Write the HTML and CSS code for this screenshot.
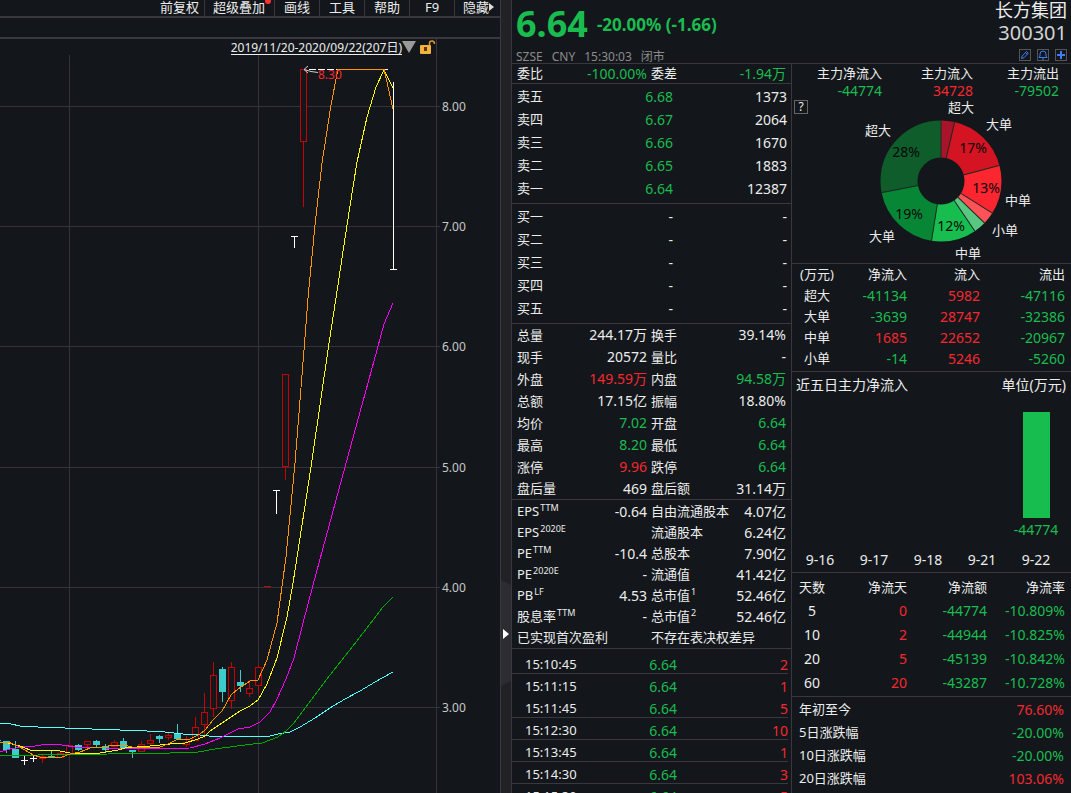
FILE: index.html
```
<!DOCTYPE html>
<html lang="zh-CN">
<head>
    <meta charset="UTF-8">
    <meta name="viewport" content="width=device-width, initial-scale=1.0">
    <title>长方集团 300301</title>
    <link rel="stylesheet" href="styles.css">
</head>
<body>
    <div class="terminal">
        <main class="chart-pane">
            <nav class="toolbar">
                <button>前复权</button>
                <button class="has-dot">超级叠加</button>
                <button>画线</button>
                <button>工具</button>
                <button>帮助</button>
                <button>F9</button>
                <button class="hide-btn">隐藏<svg width="5" height="8" viewBox="0 0 5 8"><path d="M0 0L5 4L0 8z" fill="#ddd"/></svg></button>
            </nav>
            <div class="strip"></div>
            <div class="chart-head">
                <button class="range">2019/11/20-2020/09/22(207日)</button>
                <svg width="14" height="12" viewBox="0 0 14 12"><path d="M0 0H14L7 12z" fill="#9a9a9a"/></svg>
                <svg class="lock" width="16" height="15" viewBox="0 0 16 15">
                    <rect x="0" y="5" width="11" height="9" rx="1" fill="#f3b33d"/>
                    <path d="M4 7H7V11H4z" fill="#5a3c08"/>
                    <path d="M9.500 5V3Q9.500 1 12 1Q14.500 1 14.500 4" fill="none" stroke="#d8982a" stroke-width="1.500"/>
                </svg>
            </div>
            <svg class="kline" viewBox="0 55 500 738" preserveAspectRatio="xMinYMin meet">
                <g class="grid">
                    <path d="M0 106.500H440M0 226.500H440M0 346.500H440M0 467.500H440M0 587.500H440M0 707.500H440"/>
                    <path d="M69.500 55V793M258.500 55V793M436.500 55V793"/>
                </g>
                <g class="axis">
                    <text x="442" y="111">8.00</text>
                    <text x="442" y="231">7.00</text>
                    <text x="442" y="351">6.00</text>
                    <text x="442" y="472">5.00</text>
                    <text x="442" y="592">4.00</text>
                    <text x="442" y="712">3.00</text>
                </g>
                <g id="candles"></g>
                <g class="marks">
                    <!-- one-price limit days -->
                    <path d="M309 69.500H389" stroke-dasharray="7 2"/>
                    <path d="M21 760.500h7M24.500 755v10M30 758.500h7M33.500 755v7"/>
                    <path d="M273 490.500h7M276.500 490v24M291 236.500h7M294.500 236v12"/>
                    <path d="M393.500 82V269M390 269.500h7"/>
                    <path d="M264 586.500h7" stroke="#c00"/>
                </g>
                <g class="ma">
                    <polyline stroke="#5ff" points="0,723 11,724 20,726 38,727 65,728 92,729 120,730 147,731 165,732 183,734 200,735 209,736 270,736 278,734 290,732 300,727 315,718 330,708 345,699 360,691 375,682 393,672"/>
                    <polyline stroke="#0a0" points="0,755 38,755 108,754 112,753 170,753 198,752 215,749 230,747 245,745 262,743 278,737 286,731 293,724 300,715 312,699 330,675 353,646 370,624 383,607 393,597"/>
                    <polyline stroke="#f0f" points="0,752 10,749 22,747 35,746 48,744 62,745 75,747 92,747 105,748 140,749 190,748 205,744 220,738 238,729 250,727 260,722 270,712 277,699 286,679 294,658 302,627 313,585 345,467 377,350 384,324 393,303"/>
                    <polyline stroke="#ff0" points="0,742 8,743 20,746 30,750 60,751 70,753 80,754 100,753 118,750 125,748 150,746 170,744 185,743 198,739 205,736 210,731 225,721 240,711 250,706 258,700 267,684 277,658 287,617 293,583 311,467 328,350 336,298 347,225 357,162 367,117 376,87 384,70 393,88"/>
                    <polyline stroke="#ff9500" points="0,743 8,742 18,746 25,750 33,755 40,757 55,758 62,757 70,754 80,752 90,748 105,747 112,745 125,745 135,748 160,747 168,744 178,739 190,739 200,734 205,730 213,720 222,711 231,695 238,689 250,681 258,680 267,660 277,623 286,557 295,463 304,350 308,298 315,225 322,163 331,105 338,69 384,69 393,109"/>
                </g>
                <path class="arrow" d="M308 66L304 69.500L308 73M304 69.500L311 71.500L318 72.500"/>
                <text class="high" x="318" y="79">8.30</text>
            </svg>
        </main>

        <button class="splitter" aria-label="展开">
            <svg width="10" height="106" viewBox="0 0 10 106">
                <path d="M0 0L10 5V101L0 106z" fill="#2c2c32"/>
                <path d="M2 49L8 54L2 59z" fill="#fff"/>
            </svg>
        </button>

        <aside class="quote">
            <header class="quote-head">
                <div class="price-box">
                    <div class="price-line down">
                        <strong class="price">6.64</strong>
                        <strong class="change">-20.00% (-1.66)</strong>
                    </div>
                    <div class="market"><span>SZSE</span><span>CNY</span><span>15:30:03</span><span>闭市</span></div>
                </div>
                <div class="stock">
                    <h1>长方集团</h1>
                    <div class="code">300301</div>
                    <div class="tools">
                        <button aria-label="编辑"><svg width="10" height="10" viewBox="0 0 10 10"><path d="M1.500 8.500L2.200 6L6.500 1.500L8.300 3.200L4 7.700zM5.500 2.500L7.300 4.300"/></svg></button>
                        <button aria-label="提醒"><svg width="10" height="10" viewBox="0 0 10 10"><path d="M1 7.500H9L8 6V4Q8 1 5 1Q2 1 2 4V6zM4 9H6"/></svg></button>
                        <button aria-label="添加"><svg width="10" height="10" viewBox="0 0 10 10"><path d="M5 1V9M1 5H9" stroke-width="2"/></svg></button>
                    </div>
                </div>
            </header>

            <div class="columns">
                <section class="book">
                    <table class="pairs weibi">
                        <tr><th>委比</th><td class="down">-100.00%</td><th>委差</th><td class="down">-1.94万</td></tr>
                    </table>
                    <table class="levels">
                        <tr><th>卖五</th><td class="down">6.68</td><td>1373</td></tr>
                        <tr><th>卖四</th><td class="down">6.67</td><td>2064</td></tr>
                        <tr><th>卖三</th><td class="down">6.66</td><td>1670</td></tr>
                        <tr><th>卖二</th><td class="down">6.65</td><td>1883</td></tr>
                        <tr><th>卖一</th><td class="down">6.64</td><td>12387</td></tr>
                    </table>
                    <table class="levels">
                        <tr><th>买一</th><td>-</td><td>-</td></tr>
                        <tr><th>买二</th><td>-</td><td>-</td></tr>
                        <tr><th>买三</th><td>-</td><td>-</td></tr>
                        <tr><th>买四</th><td>-</td><td>-</td></tr>
                        <tr><th>买五</th><td>-</td><td>-</td></tr>
                    </table>
                    <table class="pairs stats">
                        <tr><th>总量</th><td>244.17万</td><th>换手</th><td>39.14%</td></tr>
                        <tr><th>现手</th><td>20572</td><th>量比</th><td>-</td></tr>
                        <tr><th>外盘</th><td class="up">149.59万</td><th>内盘</th><td class="down">94.58万</td></tr>
                        <tr><th>总额</th><td>17.15亿</td><th>振幅</th><td>18.80%</td></tr>
                        <tr><th>均价</th><td class="down">7.02</td><th>开盘</th><td class="down">6.64</td></tr>
                        <tr><th>最高</th><td class="down">8.20</td><th>最低</th><td class="down">6.64</td></tr>
                        <tr><th>涨停</th><td class="up">9.96</td><th>跌停</th><td class="down">6.64</td></tr>
                        <tr><th>盘后量</th><td>469</td><th>盘后额</th><td>31.14万</td></tr>
                    </table>
                    <table class="pairs ratios">
                        <tr><th>EPS<sup>TTM</sup></th><td>-0.64</td><th>自由流通股本</th><td>4.07亿</td></tr>
                        <tr><th>EPS<sup>2020E</sup></th><td></td><th>流通股本</th><td>6.24亿</td></tr>
                        <tr><th>PE<sup>TTM</sup></th><td>-10.4</td><th>总股本</th><td>7.90亿</td></tr>
                        <tr><th>PE<sup>2020E</sup></th><td>-</td><th>流通值</th><td>41.42亿</td></tr>
                        <tr><th>PB<sup>LF</sup></th><td>4.53</td><th>总市值<sup>1</sup></th><td>52.46亿</td></tr>
                        <tr><th>股息率<sup>TTM</sup></th><td>-</td><th>总市值<sup>2</sup></th><td>52.46亿</td></tr>
                        <tr><th colspan="2">已实现首次盈利</th><th colspan="2">不存在表决权差异</th></tr>
                    </table>
                    <div class="ticks">
                        <div class="tick"><span>15:10:45</span><span class="down">6.64</span><span class="up">2</span></div>
                        <div class="tick same"><span>15:11:15</span><span class="down">6.64</span><span class="up">1</span></div>
                        <div class="tick"><span>15:11:45</span><span class="down">6.64</span><span class="up">5</span></div>
                        <div class="tick"><span>15:12:30</span><span class="down">6.64</span><span class="up">10</span></div>
                        <div class="tick"><span>15:13:45</span><span class="down">6.64</span><span class="up">1</span></div>
                        <div class="tick"><span>15:14:30</span><span class="down">6.64</span><span class="up">3</span></div>
                        <div class="tick"><span>15:15:30</span><span class="down">6.64</span><span class="up">5</span></div>
                    </div>
                </section>

                <section class="flow">
                    <div class="donut-box">
                        <div class="sums">
                            <div>主力净流入<b class="down">-44774</b></div>
                            <div>主力流入<b class="up">34728</b></div>
                            <div>主力流出<b class="down">-79502</b></div>
                        </div>
                        <div class="donut">
                            <button class="help">?</button>
                            <svg viewBox="792 100 279 163">
                                <g class="ring" transform="rotate(-90 941 181)">
                                    <circle cx="941" cy="181" r="42" pathLength="360" stroke="#a8152a" stroke-dasharray="13 347"/>
                                    <circle cx="941" cy="181" r="42" pathLength="360" stroke="#d51423" stroke-dasharray="62 298" stroke-dashoffset="-13"/>
                                    <circle cx="941" cy="181" r="42" pathLength="360" stroke="#fc2631" stroke-dasharray="47 313" stroke-dashoffset="-75"/>
                                    <circle cx="941" cy="181" r="42" pathLength="360" stroke="#ff5358" stroke-dasharray="12 348" stroke-dashoffset="-122"/>
                                    <circle cx="941" cy="181" r="42" pathLength="360" stroke="#59c681" stroke-dasharray="12 348" stroke-dashoffset="-134"/>
                                    <circle cx="941" cy="181" r="42" pathLength="360" stroke="#18bd50" stroke-dasharray="43 317" stroke-dashoffset="-146"/>
                                    <circle cx="941" cy="181" r="42" pathLength="360" stroke="#078636" stroke-dasharray="70 290" stroke-dashoffset="-189"/>
                                    <circle cx="941" cy="181" r="42" pathLength="360" stroke="#0e5d2b" stroke-dasharray="101 259" stroke-dashoffset="-259"/>
                                </g>
                                <g class="cuts">
                                    <path d="M941 158V120"/>
                                    <path d="M941 158V120" transform="rotate(13 941 181)"/>
                                    <path d="M941 158V120" transform="rotate(75 941 181)"/>
                                    <path d="M941 158V120" transform="rotate(122 941 181)"/>
                                    <path d="M941 158V120" transform="rotate(134 941 181)"/>
                                    <path d="M941 158V120" transform="rotate(146 941 181)"/>
                                    <path d="M941 158V120" transform="rotate(189 941 181)"/>
                                    <path d="M941 158V120" transform="rotate(259 941 181)"/>
                                </g>
                                <g class="pct">
                                    <text x="973" y="153">17%</text>
                                    <text x="986" y="193">13%</text>
                                    <text x="951" y="231">12%</text>
                                    <text x="909" y="219">19%</text>
                                    <text x="906" y="157">28%</text>
                                </g>
                                <g class="names">
                                    <text x="961" y="112">超大</text>
                                    <text x="999" y="129">大单</text>
                                    <text x="1018" y="205">中单</text>
                                    <text x="1005" y="235">小单</text>
                                    <text x="968" y="258">中单</text>
                                    <text x="882" y="241">大单</text>
                                    <text x="878" y="135">超大</text>
                                </g>
                            </svg>
                        </div>
                    </div>

                    <table class="grid-table orders">
                        <tr><th>(万元)</th><th>净流入</th><th>流入</th><th>流出</th></tr>
                        <tr><th>超大</th><td class="down">-41134</td><td class="up">5982</td><td class="down">-47116</td></tr>
                        <tr><th>大单</th><td class="down">-3639</td><td class="up">28747</td><td class="down">-32386</td></tr>
                        <tr><th>中单</th><td class="up">1685</td><td class="up">22652</td><td class="down">-20967</td></tr>
                        <tr><th>小单</th><td class="down">-14</td><td class="up">5246</td><td class="down">-5260</td></tr>
                    </table>

                    <div class="five-day">
                        <div class="five-title"><span>近五日主力净流入</span><span>单位(万元)</span></div>
                        <div class="bars">
                            <div class="day"><time>9-16</time></div>
                            <div class="day"><time>9-17</time></div>
                            <div class="day"><time>9-18</time></div>
                            <div class="day"><time>9-21</time></div>
                            <div class="day"><i class="bar" style="height: 106px"></i><span class="down">-44774</span><time>9-22</time></div>
                        </div>
                    </div>

                    <table class="grid-table days">
                        <tr><th>天数</th><th>净流天</th><th>净流额</th><th>净流率</th></tr>
                        <tr><td>5</td><td class="up">0</td><td class="down">-44774</td><td class="down">-10.809%</td></tr>
                        <tr><td>10</td><td class="up">2</td><td class="down">-44944</td><td class="down">-10.825%</td></tr>
                        <tr><td>20</td><td class="up">5</td><td class="down">-45139</td><td class="down">-10.842%</td></tr>
                        <tr><td>60</td><td class="up">20</td><td class="down">-43287</td><td class="down">-10.728%</td></tr>
                    </table>

                    <dl class="returns">
                        <div><dt>年初至今</dt><dd class="up">76.60%</dd></div>
                        <div><dt>5日涨跌幅</dt><dd class="down">-20.00%</dd></div>
                        <div><dt>10日涨跌幅</dt><dd class="down">-20.00%</dd></div>
                        <div><dt>20日涨跌幅</dt><dd class="up">103.06%</dd></div>
                    </dl>
                </section>
            </div>
        </aside>
    </div>

    <script>
        // x, body top, body bottom, high, low, rising
        const candles = [
            [-3, 740, 741, 740, 741, 0], [6, 741, 750, 741, 753, 0], [15, 749, 758, 741, 758, 0],
            [42, 756, 758, 755, 763, 1], [51, 756, 758, 751, 758, 0], [60, 753, 757, 752, 757, 1],
            [69, 745, 754, 745, 754, 1], [78, 745, 750, 744, 751, 0], [87, 741, 744, 741, 747, 1],
            [96, 741, 745, 740, 747, 0], [105, 746, 750, 744, 752, 0], [114, 742, 746, 740, 746, 1],
            [123, 741, 749, 738, 749, 0], [132, 750, 752, 750, 758, 0], [141, 744, 751, 741, 751, 1],
            [150, 740, 743, 734, 745, 1], [159, 736, 739, 735, 743, 0], [168, 735, 737, 732, 740, 1],
            [177, 733, 739, 724, 739, 0], [186, 742, 744, 736, 747, 1], [195, 727, 740, 717, 740, 1],
            [204, 712, 724, 693, 738, 1], [213, 675, 708, 662, 717, 1], [222, 669, 692, 667, 702, 0],
            [231, 667, 700, 662, 709, 1], [240, 682, 686, 670, 692, 0], [249, 688, 693, 680, 697, 1],
            [258, 667, 685, 665, 693, 1], [285, 374, 466, 374, 480, 1], [303, 69, 141, 69, 207, 1]
        ];
        const candleGroup = document.getElementById('candles');

        candles.forEach(([x, top, bottom, high, low, rising]) => {
            const path = document.createElementNS('http://www.w3.org/2000/svg', 'path');
            const mid = x + 0.5;
            if (rising) {
                path.setAttribute('class', 'rise');
                path.setAttribute('d', `M${x - 2.5} ${top + 0.5}h6V${bottom + 0.5}h-6zM${mid} ${high}V${top}M${mid} ${bottom + 1}V${low}`);
            } else {
                path.setAttribute('class', 'fall');
                path.setAttribute('d', `M${x - 3} ${top}h7V${bottom}h-7zM${x} ${high}h1V${low}h-1z`);
            }
            candleGroup.appendChild(path);
        });
    </script>
</body>
</html>
```
FILE: styles.css
```
/* General */
* {
    box-sizing: border-box;
}

body {
    margin: 0;
    background-color: #13171b;
    color: #ececec;
    font-family: "Noto Sans", "Noto Sans CJK SC", sans-serif;
    font-size: 13px;
    overflow: hidden;
}

button {
    margin: 0;
    padding: 0;
    border: none;
    background: none;
    color: inherit;
    font: inherit;
    cursor: pointer;
}

svg {
    display: block;
}

.up {
    color: #f5282f;
}

.down {
    color: #1abc50;
}

.terminal {
    display: flex;
    height: 100vh;
}

/* Chart side */
.chart-pane {
    flex: 1;
    min-width: 0;
    display: flex;
    flex-direction: column;
}

.toolbar {
    display: flex;
    justify-content: flex-end;
    height: 18px;
    border-bottom: 2px solid #38383e;
}

.toolbar button {
    position: relative;
    min-width: 45px;
    height: 16px;
    padding: 0 5px 2px;
    line-height: 14px;
    border-right: 1px solid #38383e;
}

.toolbar .has-dot {
    padding: 0 9px 2px 8px;
}

.has-dot::after {
    content: "";
    position: absolute;
    top: -2px;
    right: 3px;
    width: 6px;
    height: 6px;
    border-radius: 50%;
    background-color: #f33;
}

.toolbar .hide-btn {
    display: flex;
    align-items: center;
    padding-left: 8px;
    border-right: none;
}

.strip {
    height: 21px;
    border-bottom: 2px solid #38383e;
}

.chart-head {
    display: flex;
    justify-content: flex-end;
    align-items: center;
    height: 16px;
    margin-right: 63px;
    border-right: 1px solid #38383e;
}

.range {
    height: 15px;
    line-height: 15px;
    font-size: 12px;
    border-bottom: 1px solid #ececec;
}

.lock {
    margin-left: 4px;
}

.kline {
    flex: 1;
    min-height: 0;
    width: 100%;
    shape-rendering: crispEdges;
    fill: none;
}

.grid path {
    stroke: #333338;
}

.axis text {
    fill: #c8c8c8;
    font-size: 12px;
}

.marks path {
    stroke: #fff;
}

.marks path[stroke] {
    stroke: #c00;
}

.rise {
    stroke: #c80000;
    fill: #13171b;
}

.fall {
    fill: #3ccccc;
}

.arrow {
    stroke: #ccc;
    shape-rendering: auto;
}

.high {
    fill: #f5282f;
    font-size: 12px;
}

/* Splitter */
.splitter {
    display: flex;
    flex: 0 0 12px;
    flex-direction: column;
    justify-content: flex-start;
    padding-top: 580px;
    background-color: #212126;
    border-left: 1px solid #38383e;
    border-right: 1px solid #38383e;
}

/* Quote side */
.quote {
    flex: 0 0 559px;
    display: flex;
    flex-direction: column;
}

.quote-head {
    display: flex;
    justify-content: space-between;
    height: 64px;
    padding: 0 4px;
    border-bottom: 1px solid #38383e;
}

.price-line {
    display: flex;
    align-items: center;
    gap: 9px;
    height: 48px;
}

.price {
    font-size: 36px;
    line-height: 48px;
}

.change {
    font-size: 17px;
}

.market {
    display: flex;
    gap: 9px;
    color: #8c8c8c;
    font-size: 12px;
    line-height: 18px;
}

.stock {
    text-align: right;
}

.stock h1 {
    margin: 0;
    font-size: 18px;
    font-weight: normal;
    line-height: 20px;
}

.code {
    color: #d4d4d4;
    font-size: 20px;
    line-height: 26px;
}

.tools {
    display: flex;
    justify-content: flex-end;
    gap: 6px;
    margin-top: 3px;
}

.tools button {
    width: 12px;
    height: 12px;
    border: 1px solid #555;
}

.tools path {
    fill: none;
    stroke: #3b7df5;
}

.columns {
    flex: 1;
    display: flex;
    min-height: 0;
}

.book {
    flex: 0 0 280px;
    border-right: 1px solid #38383e;
}

.flow {
    flex: 1;
}

/* Tables */
table {
    width: 100%;
    border-collapse: separate;
    border-spacing: 0;
    table-layout: fixed;
    border-bottom: 1px solid #38383e;
}

th, td {
    padding: 0;
    font-weight: normal;
    text-align: right;
    white-space: nowrap;
}

td {
    font-size: 14px;
}

.book th {
    text-align: left;
    padding-left: 5px;
}

.book .pairs td + th,
.book .pairs th + th {
    padding-left: 4px;
}

.book td:last-child {
    padding-right: 4px;
}

.levels {
    padding: 1px 0 3px;
}

.levels tr > * {
    height: 23px;
    line-height: 23px;
}

.levels th {
    width: 50px;
}

.levels td:nth-child(2) {
    width: 111px;
}

.pairs th:first-child {
    width: 60px;
}

.pairs td:nth-child(2) {
    width: 75px;
}

.pairs td:last-child {
    width: 56px;
    padding-right: 5px;
}

.weibi tr > * {
    height: 19px;
    line-height: 19px;
}

.stats tr > * {
    height: 22px;
    line-height: 22px;
}

.stats tr:last-child > * {
    height: 21px;
    line-height: 21px;
}

.ratios {
    padding-top: 1px;
}

.ratios tr > * {
    height: 21px;
    line-height: 21px;
}

sup {
    margin-left: 1px;
    font-size: 9px;
    line-height: 9px;
}

/* Trades */
.ticks {
    padding: 3px 3px 0 0;
}

.tick {
    display: grid;
    grid-template-columns: 65px 87px 1fr;
    height: 22px;
    padding: 2px 0 0 13px;
    line-height: 21px;
    border-bottom: 1px solid #38383e;
}

.tick.same {
    border-bottom-color: transparent;
}

.tick span + span {
    font-size: 14px;
    text-align: right;
}

/* Money flow */
.donut-box {
    border-bottom: 1px solid #38383e;
}

.sums {
    display: grid;
    grid-template-columns: 65px 91px 1fr;
    height: 36px;
    padding: 1px 12px 0 25px;
    line-height: 17px;
    text-align: right;
}

.sums b {
    display: block;
    font-size: 14px;
    font-weight: normal;
}

.donut {
    position: relative;
}

.help {
    position: absolute;
    top: 0;
    left: 2px;
    width: 14px;
    height: 14px;
    border: 1px solid #666;
    font-size: 12px;
    line-height: 12px;
}

.ring circle {
    fill: none;
    stroke-width: 37;
}

.cuts path {
    stroke: #1c2a22;
}

.pct text {
    fill: #08090a;
    font-size: 14px;
    text-anchor: middle;
}

.names text {
    fill: #ececec;
    text-anchor: middle;
}

.grid-table tr > :first-child {
    width: 50px;
    text-align: center;
}

.grid-table tr > :nth-child(2) {
    width: 65px;
}

.grid-table tr > :last-child {
    padding-right: 6px;
}

.orders {
    padding-bottom: 2px;
}

.orders tr > * {
    height: 21px;
    line-height: 21px;
}

.orders tr > :nth-child(3) {
    width: 73px;
}

.days {
    padding: 2px 0 1px;
}

.grid-table.days tr > :first-child {
    width: 40px;
}

.grid-table.days tr > :nth-child(2) {
    width: 75px;
}

.days tr > * {
    height: 24px;
    line-height: 24px;
}

.days tr > :nth-child(3) {
    width: 80px;
}

/* Five-day bars */
.five-day {
    padding-top: 2px;
    border-bottom: 1px solid #38383e;
}

.five-title {
    display: flex;
    justify-content: space-between;
    padding: 0 5px 0 4px;
    font-size: 14px;
    line-height: 22px;
}

.bars {
    display: flex;
    height: 176px;
    padding: 0 8px 0 1px;
}

.day {
    flex: 1;
    display: flex;
    flex-direction: column;
    align-items: center;
    padding-top: 16px;
    font-size: 14px;
    line-height: 24px;
}

.bar {
    width: 27px;
    background-color: #18bd50;
}

.day time {
    margin-top: auto;
}

/* Period returns */
.returns {
    margin: 0;
    padding: 1px 7px 0;
    line-height: 23px;
}

.returns div {
    display: flex;
    justify-content: space-between;
}

.returns dd {
    margin: 0;
    font-size: 14px;
}
```
